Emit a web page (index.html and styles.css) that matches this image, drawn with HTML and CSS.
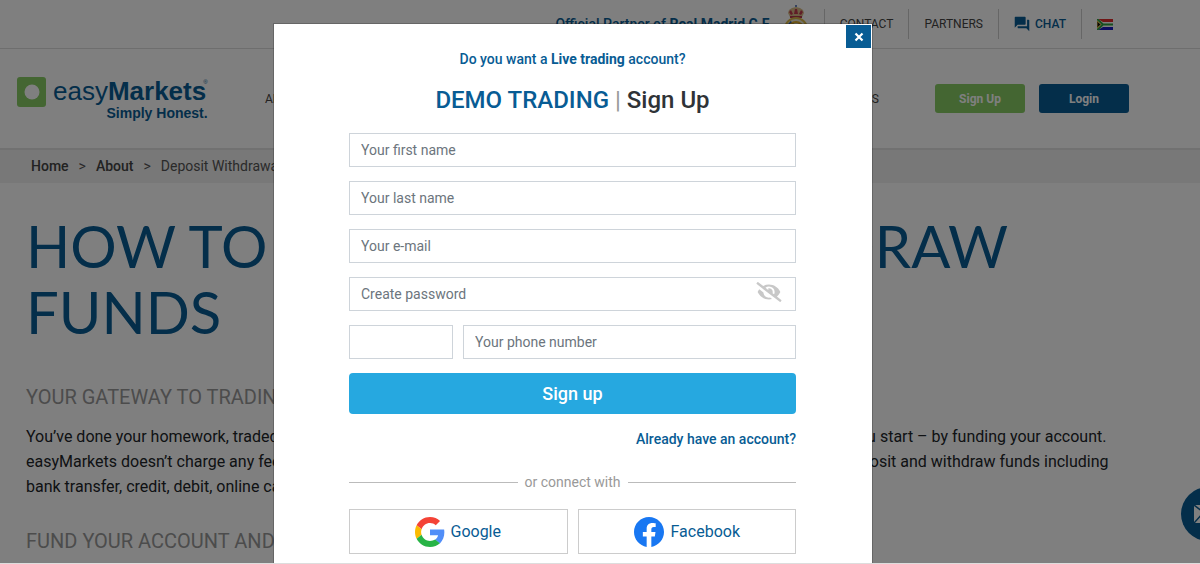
FILE: index.html
```html
<!DOCTYPE html>
<html lang="en">
<head>
	<title>Deposit and Withdrawal | easyMarkets</title>
	<meta charset="UTF-8">
	<meta name="viewport" content="width=device-width, initial-scale=1">
	<link rel="stylesheet" href="styles.css">
</head>
<body>
	<header class="header">
		<div class="topbar">
			<a class="partner" href="#">
				<span>Official Partner of <b>Real Madrid C.F.</b></span>
				<svg class="crest" viewBox="0 0 24 38">
					<path d="M6 12 4 8 5 5l3-2 4-1 4 1 3 2 1 3-2 4z" fill="#d8bb86"/>
					<path d="M7 10 5 7l2-2 2 4zM10 9l1-5h2l1 5zM15 9l2-4 2 2-2 3z" fill="#c03a4e"/>
					<circle cx="12" cy="1" r="1" fill="#3a5fa8"/>
					<path d="M6 12h12" stroke="#b33a4e" stroke-width="2"/>
					<circle cx="12" cy="24" r="11" fill="#e8e6d8" stroke="#d9b84a" stroke-width="2"/>
					<path d="m5 18 15 13" stroke="#2f5ea8" stroke-width="5"/>
					<circle cx="12" cy="24" r="7" fill="none" stroke="#d9a92b" stroke-width="2"/>
					<path d="M9 27v-7l3 4 3-4v7" fill="none" stroke="#d9a92b" stroke-width="2"/>
				</svg>
			</a>
			<a class="toplink" href="#">CONTACT</a>
			<a class="toplink" href="#">PARTNERS</a>
			<a class="toplink chat" href="#">
				<svg width="16" height="16" viewBox="1 1 22 22"><path fill="currentColor" d="M21 6h-2v9H6v2c0 .55.45 1 1 1h11l4 4V7c0-.55-.45-1-1-1zm-4 6V3c0-.55-.45-1-1-1H3c-.55 0-1 .45-1 1v14l4-4h10c.55 0 1-.45 1-1z"/></svg>
				CHAT
			</a>
			<a class="toplink flag" href="#" aria-label="South Africa">
				<svg width="16" height="11" viewBox="0 0 16 11">
					<path fill="#fff" d="M0 0h16v11H0z"/>
					<path fill="#e02a2a" d="M1 0h15v3H6z"/>
					<path fill="#1a1ac0" d="M1 11h15V8H6z"/>
					<path d="M0 0l6 5.500L0 11M6 5.500h10" fill="none" stroke="#2f9f3f" stroke-width="2"/>
					<path d="M0 2l4 3.500L0 9z" fill="#111" stroke="#e8b93a"/>
				</svg>
			</a>
		</div>
		<div class="mainbar">
			<a class="logo" href="#">
				<svg width="30" height="30" viewBox="0 0 30 30"><rect width="29" height="30" rx="3" fill="#88cc64"/><circle cx="15" cy="15" r="7.500" fill="#fff"/></svg>
				<span class="logo-text">
					<span class="brand">easy<b>Markets</b><sup>®</sup></span>
					<span class="slogan">Simply Honest.</span>
				</span>
			</a>
			<nav class="menu">
				<a href="#">ABOUT</a>
				<a href="#">PLATFORMS</a>
				<a href="#">MARKETS</a>
				<a href="#">LEARN</a>
				<a href="#">TOOLS</a>
			</nav>
			<div class="account">
				<button class="btn green">Sign Up</button>
				<button class="btn blue">Login</button>
			</div>
		</div>
	</header>
	<div class="breadcrumb">
		<a href="#">Home</a>
		<span>&gt;</span>
		<a href="#">About</a>
		<span>&gt;</span>
		<span>Deposit Withdrawal</span>
	</div>
	<main class="content">
		<h1>HOW TO DEPOSIT AND WITHDRAW FUNDS</h1>
		<h2>YOUR GATEWAY TO TRADING</h2>
		<p>You’ve done your homework, traded on your demo account and now there is just one more thing to undertake before you start – by funding your account.<br>
		easyMarkets doesn’t charge any fees in your transactions and there are many different and very accessible ways to deposit and withdraw funds including<br>
		bank transfer, credit, debit, online cards and eWallets.</p>
		<h2>FUND YOUR ACCOUNT AND TRADE</h2>
	</main>
	<button class="mail" aria-label="Contact us">
		<svg width="26" height="18" viewBox="0 0 26 18"><path fill="#fff" d="M0 0h26v18H0z"/><path d="m0 0 13 10L26 0M0 18 9 8M26 18 17 8" fill="none" stroke="#085c94" stroke-width="1.500"/></svg>
	</button>

	<div class="overlay">
		<div class="modal" role="dialog" aria-labelledby="modal-title">
			<button class="close" aria-label="Close">
				<svg width="10" height="10" viewBox="0 0 10 10"><path d="m1.500 1.500 7 7M8.500 1.500l-7 7" stroke="#fff" stroke-width="2.200"/></svg>
			</button>
			<a class="live" href="#">Do you want a <b>Live trading</b> account?</a>
			<h3 id="modal-title"><span class="demo">DEMO TRADING</span> <span class="bar">|</span> Sign Up</h3>
			<form class="form">
				<input type="text" placeholder="Your first name" aria-label="Your first name">
				<input type="text" placeholder="Your last name" aria-label="Your last name">
				<input type="email" placeholder="Your e-mail" aria-label="Your e-mail">
				<div class="password">
					<input type="password" placeholder="Create password" aria-label="Create password">
					<button type="button" class="eye" aria-label="Show password">
						<svg width="26" height="20" viewBox="0 0 640 512"><path fill="#c8c8c8" d="M320 400c-75.870 0-137.250-58.710-142.900-133.110L72.200 185.820c-13.790 17.300-26.480 35.590-36.720 55.590a32.350 32.350 0 0 0 0 29.190C89.710 376.410 197.070 448 320 448c26.910 0 52.870-4 77.890-10.460L346 397.390a144.130 144.130 0 0 1-26 2.610zm313.820 58.100l-110.550-85.440a331.250 331.250 0 0 0 81.250-102.070 32.350 32.350 0 0 0 0-29.190C550.290 135.590 442.930 64 320 64a308.150 308.150 0 0 0-147.320 37.700L45.460 3.370A16 16 0 0 0 23 6.180L3.370 31.450A16 16 0 0 0 6.180 53.900l588.360 454.730a16 16 0 0 0 22.460-2.810l19.640-25.270a16 16 0 0 0-2.820-22.450zm-183.720-142l-39.300-30.380A94.750 94.750 0 0 0 416 256a94.760 94.760 0 0 0-121.310-92.210A47.650 47.650 0 0 1 304 192a46.640 46.640 0 0 1-1.540 10l-73.610-56.890A142.310 142.310 0 0 1 320 112a143.920 143.920 0 0 1 144 144c0 21.630-5.290 41.790-13.900 60.110z"/></svg>
					</button>
				</div>
				<div class="phone">
					<input class="code" type="text" aria-label="Country code">
					<input type="tel" placeholder="Your phone number" aria-label="Your phone number">
				</div>
				<button class="submit" type="submit">Sign up</button>
			</form>
			<a class="already" href="#">Already have an account?</a>
			<div class="connect">or connect with</div>
			<div class="social">
				<button>
					<svg width="30" height="30" viewBox="0 0 48 48">
						<path fill="#f44336" d="M24 9.500c3.540 0 6.710 1.220 9.210 3.600l6.850-6.850C35.900 2.380 30.470 0 24 0 14.620 0 6.510 5.380 2.560 13.220l7.980 6.190C12.430 13.720 17.740 9.500 24 9.500z"/>
						<path fill="#518ef8" d="M46.980 24.550c0-1.570-.15-3.090-.38-4.550H24v9.020h12.940c-.58 2.960-2.260 5.480-4.780 7.180l7.730 6c4.510-4.180 7.090-10.360 7.090-17.650z"/>
						<path fill="#fbbb00" d="M10.530 28.590c-.48-1.450-.76-2.990-.76-4.590s.27-3.140.76-4.590l-7.980-6.190C.92 16.460 0 20.120 0 24c0 3.880.92 7.540 2.560 10.780l7.970-6.190z"/>
						<path fill="#28b446" d="M24 48c6.480 0 11.930-2.130 15.890-5.810l-7.730-6c-2.150 1.450-4.920 2.300-8.160 2.300-6.260 0-11.570-4.220-13.470-9.910l-7.980 6.190C6.510 42.620 14.620 48 24 48z"/>
					</svg>
					Google
				</button>
				<button class="facebook">
					<svg width="30" height="30" viewBox="0 0 24 24"><circle cx="12" cy="12" r="11.500" fill="#fff"/><path fill="#1877f2" d="M24 12.073C24 5.446 18.627.073 12 .073S0 5.446 0 12.073c0 5.990 4.388 10.954 10.125 11.854v-8.385H7.078v-3.470h3.047V9.430c0-3.007 1.792-4.669 4.533-4.669 1.312 0 2.686.235 2.686.235v2.953H15.830c-1.491 0-1.956.925-1.956 1.874v2.250h3.328l-.532 3.470h-2.796v8.385C19.612 23.027 24 18.062 24 12.073z"/></svg>
					Facebook
				</button>
			</div>
		</div>
	</div>
</body>
</html>
```
FILE: styles.css
```css
*{
	box-sizing: border-box;
}
body{
	margin: 0;
	height: 100vh;
	overflow: hidden;
	font-family: Roboto, sans-serif;
	font-size: 14px;
	color: #212529;
	background-color: #fff;
}
a{
	color: #085c94;
	text-decoration: none;
}
button, input{
	font-family: inherit;
}
button{
	cursor: pointer;
	border: 0;
	padding: 0;
}
svg{
	display: block;
	flex-shrink: 0;
}

/* header */
.header{
	border-bottom: 2px solid #e2e2e2;
	box-shadow: 0 2px 4px #ddd;
}
.topbar{
	display: flex;
	justify-content: flex-end;
	align-items: center;
	height: 49px;
	padding-right: 72px;
	border-bottom: 1px solid #ddd;
}
.partner{
	display: flex;
	align-items: center;
	gap: 12px;
	padding-right: 16px;
	font-weight: 500;
}
.crest{
	width: 24px;
	height: 38px;
}
.toplink{
	display: flex;
	align-items: center;
	gap: 5px;
	height: 30px;
	padding: 0 15px;
	border-left: 1px solid #ccc;
	font-size: 12px;
	color: #444;
}
.chat{
	color: #085c94;
	font-weight: 500;
}
.mainbar{
	display: flex;
	align-items: center;
	height: 99px;
	padding: 0 71px 0 17px;
}
.logo{
	display: flex;
	width: 248px;
	gap: 6px;
	font-family: "Liberation Sans", sans-serif;
}
.logo-text{
	display: flex;
	flex-direction: column;
	align-items: flex-end;
}
.brand{
	font-size: 26px;
	line-height: 28px;
}
.brand sup{
	margin-left: -3px;
	font-size: 6px;
	vertical-align: 16px;
	line-height: 1;
}
.slogan{
	font-size: 14px;
	line-height: 16px;
	font-weight: bold;
}
.menu{
	display: flex;
	justify-content: space-between;
	flex: 1;
}
.menu a{
	font-size: 12px;
	color: #444;
}
.account{
	display: flex;
	gap: 14px;
	padding-left: 56px;
}
.btn{
	width: 90px;
	height: 29px;
	border-radius: 3px;
	color: #fff;
	font-size: 12px;
	font-weight: bold;
}
.green{
	background-color: #88cc64;
}
.blue{
	background-color: #085c94;
}

/* page */
.breadcrumb{
	display: flex;
	gap: 10px;
	padding: 0 31px;
	line-height: 33px;
	background-color: #f0f0f0;
	color: #555;
}
.breadcrumb a{
	color: #444;
	font-weight: 500;
}
.content{
	padding: 30px 26px;
}
h1{
	margin: 0 0 40px;
	font-family: Lato, sans-serif;
	font-size: 58px;
	line-height: 66px;
	font-weight: normal;
	color: #085c94;
}
h2{
	margin: 0;
	font-size: 20px;
	line-height: 24px;
	font-weight: normal;
	color: #999;
}
.content p{
	margin: 15px 0 30px;
	font-size: 16px;
	line-height: 25px;
	white-space: nowrap;
}
.mail{
	position: fixed;
	right: -35px;
	bottom: 23px;
	display: flex;
	justify-content: flex-start;
	align-items: center;
	width: 54px;
	height: 54px;
	padding-left: 13px;
	border-radius: 50%;
	background-color: #085c94;
}

/* sign up window */
.overlay{
	position: fixed;
	inset: 0;
	display: flex;
	justify-content: center;
	align-items: flex-start;
	padding: 23px 54px 0 0;
	overflow: hidden;
	border-bottom: 1px solid #ddd;
	background-color: rgba(0,0,0,.5);
	background-clip: padding-box;
}
.modal{
	position: relative;
	display: flex;
	flex-direction: column;
	width: 600px;
	padding: 25px 76px 40px 75px;
	border: 1px solid rgba(0,0,0,.2);
	background-color: #fff;
	background-clip: padding-box;
}
.close{
	position: absolute;
	top: 1px;
	right: 1px;
	display: flex;
	align-items: center;
	justify-content: center;
	width: 25px;
	height: 23px;
	background-color: #085c94;
}
.live{
	line-height: 20px;
	text-align: center;
	font-weight: 500;
}
.live b{
	font-weight: bold;
}
h3{
	margin: 16px 0 18px;
	font-size: 24px;
	line-height: 30px;
	font-weight: 500;
	text-align: center;
	color: #2f3337;
}
.demo{
	color: #085c94;
}
.bar{
	color: #999;
	font-weight: normal;
}
.form{
	display: flex;
	flex-direction: column;
	gap: 14px;
}
.form input{
	width: 100%;
	height: 34px;
	padding: 0 11px;
	border: 1px solid #ced4da;
	border-radius: 0;
	font-size: 14px;
}
.form input::placeholder{
	color: #6c757d;
}
.password{
	position: relative;
}
.eye{
	position: absolute;
	top: 5px;
	right: 14px;
	background: none;
}
.phone{
	display: flex;
	gap: 10px;
}
.form .code{
	width: 104px;
	flex-shrink: 0;
}
.submit{
	height: 41px;
	border-radius: 4px;
	background-color: #26a8e0;
	color: #fff;
	font-size: 18px;
	font-weight: 500;
}
.already{
	margin: 15px 0 23px;
	line-height: 20px;
	text-align: right;
	font-weight: 500;
}
.connect{
	display: flex;
	align-items: center;
	gap: 7px;
	line-height: 20px;
	color: #999;
}
.connect::before, .connect::after{
	content: "";
	flex: 1;
	height: 1px;
	background-color: #bbb;
}
.social{
	display: flex;
	gap: 10px;
	margin-top: 17px;
}
.social button{
	display: flex;
	flex: 1;
	justify-content: center;
	align-items: center;
	gap: 5px;
	height: 45px;
	border: 1px solid #ccc;
	background-color: #fff;
	font-size: 16px;
	color: #085c94;
}
.social .facebook{
	gap: 7px;
}
```
